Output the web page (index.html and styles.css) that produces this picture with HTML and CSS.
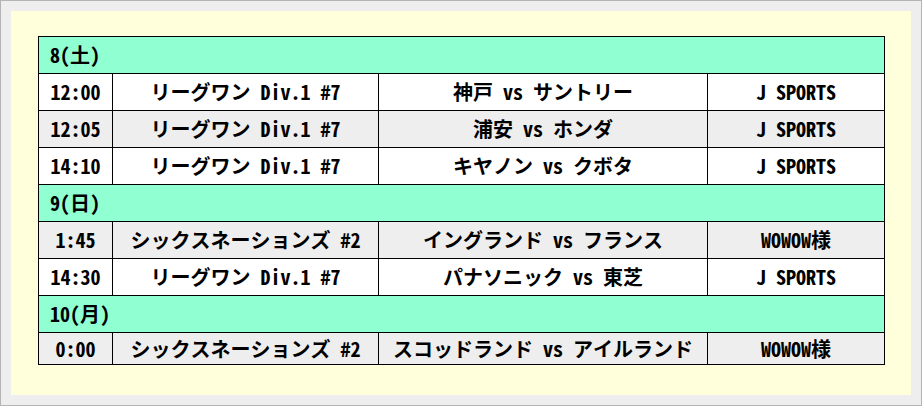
FILE: index.html
```html
<!DOCTYPE html>
<html lang="ja">
<head>
<meta charset="utf-8">
<title>放送予定</title>
<link rel="stylesheet" href="styles.css">
</head>
<body>
<div class="frame">
  <div class="panel">
    <table class="schedule">
      <colgroup>
        <col class="c-time">
        <col class="c-comp">
        <col class="c-match">
        <col class="c-tv">
      </colgroup>
      <tbody>
        <tr class="day"><td colspan="4">8(土)</td></tr>
        <tr class="odd"><td>12:00</td><td>リーグワン Div.1 #7</td><td>神戸 vs サントリー</td><td>J SPORTS</td></tr>
        <tr class="even"><td>12:05</td><td>リーグワン Div.1 #7</td><td>浦安 vs ホンダ</td><td>J SPORTS</td></tr>
        <tr class="odd"><td>14:10</td><td>リーグワン Div.1 #7</td><td>キヤノン vs クボタ</td><td>J SPORTS</td></tr>
        <tr class="day"><td colspan="4">9(日)</td></tr>
        <tr class="even"><td>1:45</td><td>シックスネーションズ #2</td><td>イングランド vs フランス</td><td>WOWOW様</td></tr>
        <tr class="odd"><td>14:30</td><td>リーグワン Div.1 #7</td><td>パナソニック vs 東芝</td><td>J SPORTS</td></tr>
        <tr class="day"><td colspan="4">10(月)</td></tr>
        <tr class="even last"><td>0:00</td><td>シックスネーションズ #2</td><td>スコッドランド vs アイルランド</td><td>WOWOW様</td></tr>
      </tbody>
    </table>
  </div>
</div>
</body>
</html>
```
FILE: styles.css
```css
html, body {
  margin: 0;
  padding: 0;
}
body {
  width: 922px;
  height: 406px;
  overflow: hidden;
}
.frame {
  box-sizing: border-box;
  width: 922px;
  height: 406px;
  border: 1px solid #b4b4b4;
  background: #eeeeee;
  padding: 10px;
}
.panel {
  box-sizing: border-box;
  width: 900px;
  height: 384px;
  background: #ffffdc;
  padding: 25px 0 0 27px;
}
.schedule {
  border-collapse: collapse;
  table-layout: fixed;
  width: 847px;
  font-family: "Noto Sans Mono CJK JP", "Noto Sans CJK JP", "DejaVu Sans Mono", monospace;
  font-weight: bold;
  font-size: 20px;
  color: #000;
}
.c-time { width: 74px; }
.c-comp { width: 266px; }
.c-match { width: 329px; }
.c-tv { width: 177px; }
.schedule td {
  border: 1px solid #000;
  height: 36px;
  padding: 0;
  text-align: center;
  vertical-align: middle;
  line-height: 20px;
  white-space: nowrap;
}
.schedule tr.last td {
  height: 31px;
}
.day td {
  background: #90ffd2;
  text-align: left;
  padding-left: 11px;
}
.odd td {
  background: #ffffff;
}
.even td {
  background: #eeeeee;
}
```
